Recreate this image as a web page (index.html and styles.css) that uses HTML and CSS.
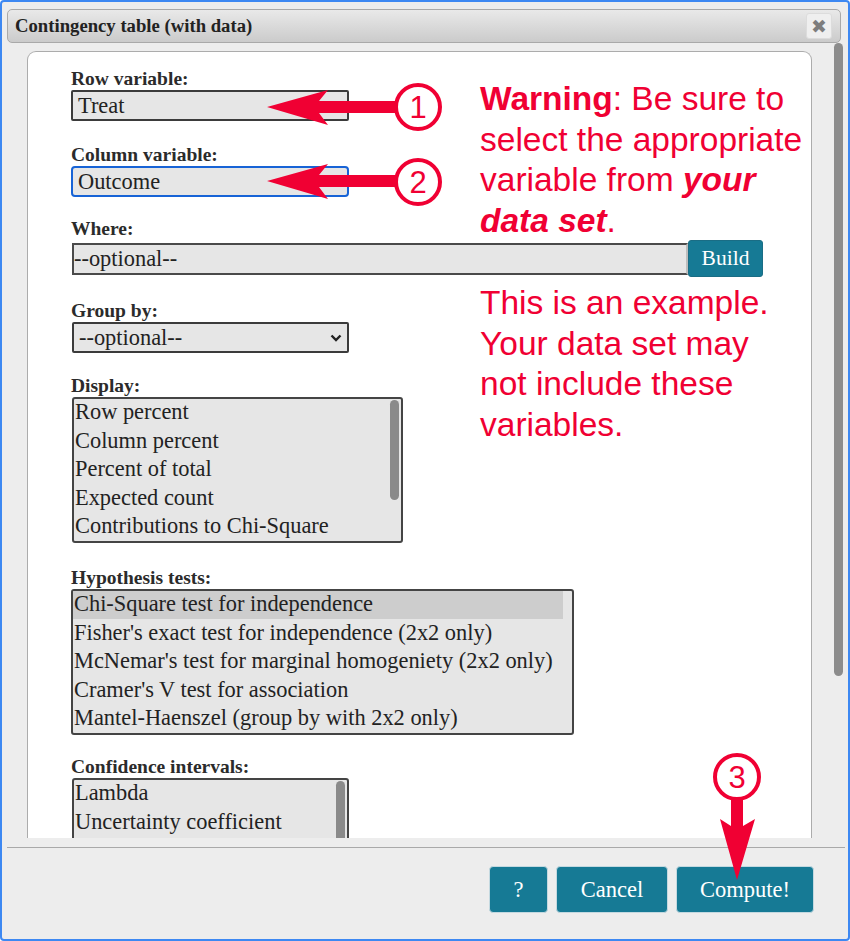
FILE: index.html
```html
<!DOCTYPE html>
<html lang="en">
<head>
<meta charset="utf-8">
<title>Contingency table (with data)</title>
<link rel="stylesheet" href="styles.css">
</head>
<body>
<div class="stage">
  <div class="dialog">
    <div class="titlebar">
      <span class="title">Contingency table (with data)</span>
      <button class="close" aria-label="Close">&#10006;</button>
    </div>
    <div class="content-wrap">
      <div class="content">
        <div class="panel">
          <div class="field f-row">
            <div class="label">Row variable:</div>
            <div class="select">Treat</div>
          </div>
          <div class="field f-col">
            <div class="label">Column variable:</div>
            <div class="select focused">Outcome</div>
          </div>
          <div class="field f-where">
            <div class="label">Where:</div>
            <div class="where-row">
              <div class="text-input">--optional--</div>
              <button class="btn build">Build</button>
            </div>
          </div>
          <div class="field f-group">
            <div class="label">Group by:</div>
            <div class="select dropdown">
              <span>--optional--</span>
              <svg class="chev" width="12" height="8" viewBox="0 0 12 8"><path d="M1.5 1.5 L6 6 L10.5 1.5" fill="none" stroke="#222" stroke-width="2.4"/></svg>
            </div>
          </div>
          <div class="field f-display">
            <div class="label">Display:</div>
            <div class="listbox display">
              <div class="options">
                <div class="opt">Row percent</div>
                <div class="opt">Column percent</div>
                <div class="opt">Percent of total</div>
                <div class="opt">Expected count</div>
                <div class="opt">Contributions to Chi-Square</div>
              </div>
              <div class="lb-track"><div class="lb-thumb display-thumb"></div></div>
            </div>
          </div>
          <div class="field f-hypo">
            <div class="label">Hypothesis tests:</div>
            <div class="listbox hypo">
              <div class="options">
                <div class="opt selected">Chi-Square test for independence</div>
                <div class="opt">Fisher's exact test for independence (2x2 only)</div>
                <div class="opt">McNemar's test for marginal homogeniety (2x2 only)</div>
                <div class="opt">Cramer's V test for association</div>
                <div class="opt">Mantel-Haenszel (group by with 2x2 only)</div>
              </div>
            </div>
          </div>
          <div class="field">
            <div class="label">Confidence intervals:</div>
            <div class="listbox conf">
              <div class="options">
                <div class="opt">Lambda</div>
                <div class="opt">Uncertainty coefficient</div>
              </div>
              <div class="lb-track"><div class="lb-thumb conf-thumb"></div></div>
            </div>
          </div>
        </div>
      </div>
      <div class="scrolltrack"><div class="thumb"></div></div>
    </div>
    <div class="buttonpane">
      <button class="btn pane-btn help">?</button>
      <button class="btn pane-btn cancel">Cancel</button>
      <button class="btn pane-btn compute">Compute!</button>
    </div>
  </div>

  <div class="note note-warning"><b>Warning</b>: Be sure to<br>select the appropriate<br>variable from <b><i>your</i></b><br><b><i>data set</i></b>.</div>
  <div class="note note-example">This is an example.<br>Your data set may<br>not include these<br>variables.</div>

  <svg class="marks" width="850" height="941" viewBox="0 0 850 941">
    <g fill="#f00033">
      <polygon points="267,107 328,90 319,101 400,101 400,113 319,113 328,125"/>
      <polygon points="267,181 328,164 319,175 400,175 400,187 319,187 328,199"/>
      <polygon points="731,795 743,795 743,826 755,819 737,880 720,819 731,826"/>
    </g>
    <g fill="#ffffff" stroke="#f00033" stroke-width="4">
      <circle cx="418" cy="107" r="22"/>
      <circle cx="418" cy="182" r="22"/>
      <circle cx="737" cy="777" r="22"/>
    </g>
    <g class="num" fill="#f00033" text-anchor="middle">
      <text x="418" y="118">1</text>
      <text x="418" y="193">2</text>
      <text x="737" y="788">3</text>
    </g>
  </svg>
</div>
</body>
</html>
```

FILE: styles.css
```css
* { box-sizing: border-box; }

html, body {
  margin: 0;
  padding: 0;
  background: #ffffff;
}

.stage {
  position: relative;
  width: 850px;
  height: 941px;
  overflow: hidden;
}

.dialog {
  width: 850px;
  height: 941px;
  border: 2px solid #3d88f2;
  border-radius: 4px;
  background: #ededed;
  display: flex;
  flex-direction: column;
  overflow: hidden;
}

.titlebar {
  margin: 7px 7px 0 5px;
  height: 34px;
  border: 1px solid #a9a9a9;
  border-radius: 5px;
  background: linear-gradient(#e9e9e9, #cbcbcb);
  display: flex;
  align-items: center;
  padding-left: 7px;
  flex: none;
}

.title {
  font: bold 18.7px "Liberation Serif", serif;
  color: #222;
}

.close {
  margin-left: auto;
  margin-right: 8px;
  width: 26px;
  height: 26px;
  border: 1px solid #dcdcdc;
  border-radius: 3px;
  background: #efefef;
  color: #7d7d7d;
  font: 19px/1 "DejaVu Sans", sans-serif;
  padding: 0;
  display: flex;
  align-items: center;
  justify-content: center;
}

.content-wrap {
  display: flex;
  height: 795px;
  overflow: hidden;
  flex: none;
}

.content {
  flex: 1;
  padding: 8px 0 0 25px;
  overflow: hidden;
}

.panel {
  width: 785px;
  min-height: 1000px;
  background: #ffffff;
  border: 1px solid #acacac;
  border-bottom: none;
  border-radius: 9px 9px 0 0;
  padding: 15px 0 0 43px;
}

.scrolltrack {
  width: 17px;
  padding-left: 3px;
  flex: none;
}

.thumb {
  width: 9px;
  height: 633px;
  border-radius: 5px;
  background: #8c8c8c;
}

.field {
  margin-bottom: 20px;
}

.f-row { margin-bottom: 22px; }
.f-where { margin-bottom: 22px; }
.f-group { margin-bottom: 21px; }
.f-display { margin-bottom: 23px; }
.f-hypo { margin-bottom: 20px; }

.label {
  font: bold 19.5px/23px "Liberation Serif", serif;
  color: #2b2b2b;
}

.select {
  width: 278px;
  height: 31px;
  border: 2px solid #3b3b3b;
  border-radius: 2px;
  background: #e6e6e6;
  font: 22.4px/27px "Liberation Serif", serif;
  color: #222;
  padding-left: 5px;
}

.select.focused {
  border-color: #1763d6;
  border-radius: 4px;
}

.select.dropdown {
  display: flex;
  align-items: center;
  justify-content: space-between;
  width: 277px;
  padding-right: 5px;
  margin-left: 1px;
}

.chev { display: block; }

.where-row {
  display: flex;
  align-items: center;
  height: 37px;
}

.text-input {
  width: 616px;
  height: 32px;
  margin-left: 1px;
  border: 2px solid #4a4a4a;
  border-right-color: #bdbdbd;
  background: #e6e6e6;
  font: 22.4px/28px "Liberation Serif", serif;
  color: #222;
  padding-left: 0;
}

.btn {
  background: #167a95;
  color: #ffffff;
  border: 1px solid #c4d9e0;
  border-radius: 4px;
  font-family: "Liberation Serif", serif;
  padding: 0;
}

.build {
  width: 75px;
  height: 37px;
  font-size: 21.5px;
  border-radius: 3px;
  border-color: #1a6d85;
}

.listbox {
  display: flex;
  border: 2px solid #444;
  border-radius: 3px;
  background: #e6e6e6;
  margin-left: 1px;
  overflow: hidden;
}

.listbox.display {
  width: 331px;
  height: 146px;
}

.listbox.hypo {
  width: 503px;
  height: 146px;
  margin-left: 0;
}

.listbox.conf {
  width: 277px;
  height: 146px;
}

.options {
  flex: 1;
  margin-top: -1px;
}

.hypo .options {
  flex: none;
  width: 490px;
}

.opt {
  font: 22.4px/28.6px "Liberation Serif", serif;
  color: #222;
  padding-left: 1px;
  white-space: nowrap;
}

.opt.selected {
  background: #cdcdcd;
}

.lb-track {
  width: 12px;
  padding: 1px 1px 0 1px;
  flex: none;
}

.lb-thumb {
  width: 9px;
  border-radius: 5px;
  background: #8a8a8a;
}

.display-thumb { height: 100px; }
.conf-thumb { height: 120px; }

.buttonpane {
  margin: 9px 3px 0 5px;
  border-top: 1px solid #a9a9a9;
  flex: 1;
  display: flex;
  justify-content: flex-end;
  align-items: flex-start;
  gap: 8px;
  padding: 18px 31px 0 0;
}

.pane-btn {
  height: 47px;
  font-size: 22.5px;
}

.help { width: 59px; }
.cancel { width: 112px; }
.compute { width: 138px; }

.note {
  position: absolute;
  left: 480px;
  font: 33.5px/40.6px "Liberation Sans", Arial, sans-serif;
  color: #f00033;
  white-space: nowrap;
}

.note-warning { top: 79px; }
.note-example { top: 283px; }

.marks {
  position: absolute;
  left: 0;
  top: 0;
  pointer-events: none;
}

.num text {
  font: 31px "Liberation Sans", Arial, sans-serif;
}
```
